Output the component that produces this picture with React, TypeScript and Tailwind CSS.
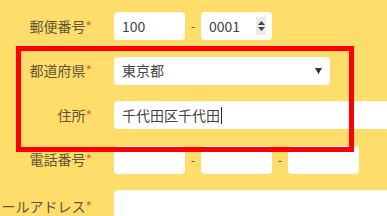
import React from "react";

const font = { fontFamily: '"Noto Sans CJK JP", "Noto Sans", sans-serif' };

function Label({ text }: { text: string }) {
  return (
    <div className="flex w-[92px] shrink-0 items-center justify-end whitespace-nowrap text-[14px] text-[#5e5536]">
      <span>{text}</span>
      <span className="text-[#e8632a]">*</span>
    </div>
  );
}

function Box({ className = "", children }: { className?: string; children?: React.ReactNode }) {
  return (
    <div className={`flex h-[28px] items-center rounded-[4px] bg-white px-[8px] text-[14px] text-[#444] ${className}`}>
      {children}
    </div>
  );
}

function Dash() {
  return <span className="w-[16px] text-center text-[13px] text-[#6b6347]">-</span>;
}

export default function App() {
  return (
    <div className="relative h-[216px] w-[387px] overflow-hidden bg-[#fedd6b]" style={font}>
      <div className="flex flex-col gap-[16.5px] pt-[12px]">
        <div className="flex items-center gap-[22px]">
          <Label text="郵便番号" />
          <div className="flex items-center">
            <Box className="w-[71px]">100</Box>
            <Dash />
            <Box className="w-[71px] justify-between pr-[6px]">
              <span>0001</span>
              <span className="flex h-[18px] w-[10px] flex-col items-center justify-center gap-[2px] bg-[#ececec]">
                <svg width="7" height="4" viewBox="0 0 7 4"><path d="M0 4L3.5 0L7 4Z" fill="#444" /></svg>
                <svg width="7" height="4" viewBox="0 0 7 4"><path d="M0 0L3.5 4L7 0Z" fill="#444" /></svg>
              </span>
            </Box>
          </div>
        </div>
        <div className="flex items-center gap-[22px]">
          <Label text="都道府県" />
          <Box className="w-[216px] justify-between pr-[8px]">
            <span>東京都</span>
            <svg width="7" height="6" viewBox="0 0 7 6"><path d="M0 0L7 0L3.5 6Z" fill="#333" /></svg>
          </Box>
        </div>
        <div className="flex items-center gap-[22px]">
          <Label text="住所" />
          <Box className="w-[290px] shrink-0">
            <span>千代田区千代田</span>
            <span className="ml-[1px] h-[17px] w-[1px] bg-[#222]" />
          </Box>
        </div>
        <div className="flex items-center gap-[22px]">
          <Label text="電話番号" />
          <div className="flex items-center">
            <Box className="w-[71px]" />
            <Dash />
            <Box className="w-[71px]" />
            <Dash />
            <Box className="w-[71px]" />
          </div>
        </div>
        <div className="flex items-start gap-[22px]">
          <div className="pt-[6px]">
            <Label text="メールアドレス" />
          </div>
          <Box className="w-[290px] shrink-0 h-[40px]" />
        </div>
      </div>
      <div className="absolute left-[16px] top-[46px] h-[106px] w-[338px] border-[5px] border-[#ff0000]" />
    </div>
  );
}
